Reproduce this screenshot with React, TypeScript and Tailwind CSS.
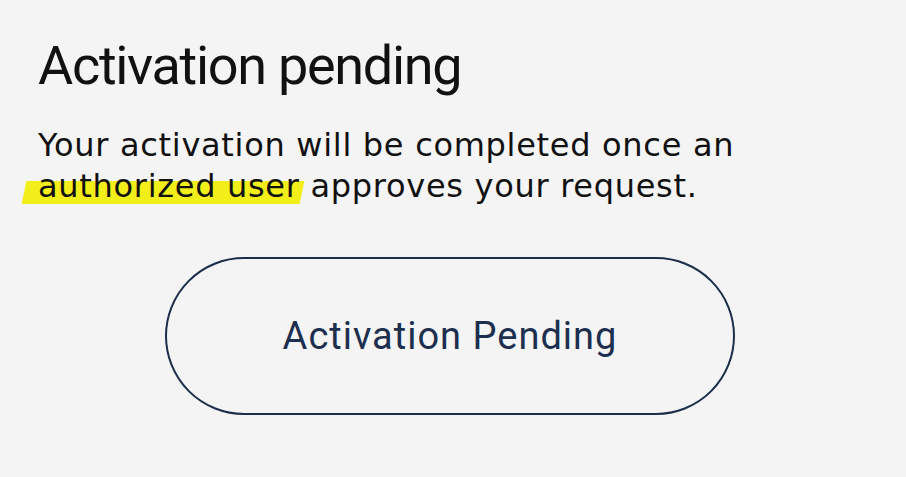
export default function ActivationPendingPage() {
  return (
    <div className="min-h-screen bg-[#f4f4f4] px-[38px] pt-[33px] text-[#111111] font-['Roboto',sans-serif]">
      <h1 className="text-[54px] font-normal leading-[66px] tracking-[-1.3px]">
        Activation pending
      </h1>
      <p className="mt-[26px] font-['DejaVu_Sans',sans-serif] text-[32px] leading-[41px] tracking-[0.7px]">
        Your activation will be completed once an
        <br />
        <span className="relative inline-block">
          <span className="absolute -left-[14px] right-[-2px] bottom-[3px] top-[15px] -skew-x-12 bg-[#f2ee1a]" />
          <span className="relative">authorized user</span>
        </span>{" "}
        approves your request.
      </p>
      <div className="ml-[127px] mt-[50px] flex h-[158px] w-[570px] items-center justify-center rounded-full border-2 border-[#1c2d4a]">
        <span className="text-[38px] tracking-[1px] text-[#1c2f4f]">Activation Pending</span>
      </div>
    </div>
  );
}
